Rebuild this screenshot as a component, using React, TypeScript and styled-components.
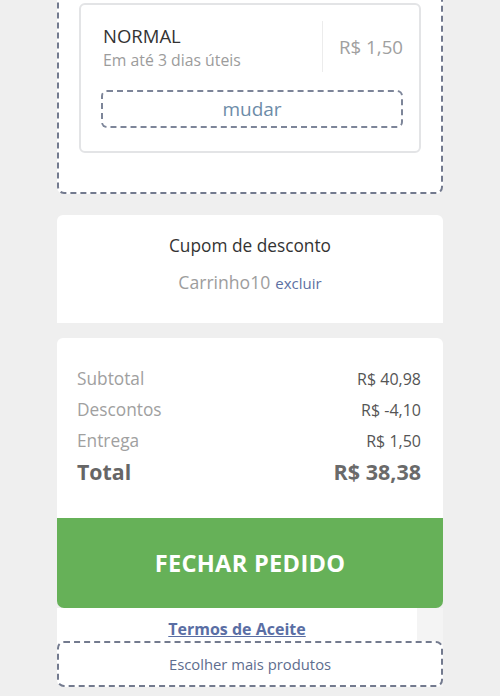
import React from "react";
import styled, { createGlobalStyle } from "styled-components";

const GlobalStyle = createGlobalStyle`
  html, body {
    margin: 0;
    padding: 0;
    background: #efefef;
    font-family: "Open Sans", "Noto Sans", sans-serif;
  }
`;

const Page = styled.div`
  width: 386px;
  margin: 0 auto;
  padding-bottom: 10px;
`;

const DashedBox = styled.div`
  border: 2px dashed #737a8e;
  border-radius: 7px;
  background: #fff;
  box-sizing: border-box;
`;

const ShippingBox = styled(DashedBox)`
  margin-top: -20px;
  padding: 21px 20px 39px;
`;

const ShippingCard = styled.div`
  border: 2px solid #e3e4e6;
  border-radius: 6px;
  padding: 16px 16px 23px 20px;
`;

const ShippingRow = styled.div`
  display: flex;
  align-items: center;
`;

const ShippingInfo = styled.div`
  flex: 1;
  padding-left: 2px;
`;

const ShippingName = styled.div`
  font-size: 18.5px;
  line-height: 27px;
  color: #333;
`;

const ShippingDays = styled.div`
  font-size: 15.8px;
  line-height: 22px;
  color: #9c9c9c;
`;

const ShippingPrice = styled.div`
  border-left: 1px solid #ececec;
  height: 51px;
  padding-left: 16px;
  display: flex;
  align-items: center;
  font-size: 18.7px;
  color: #a0a0a0;
`;

const ChangeButton = styled.div`
  margin-top: 18px;
  height: 38px;
  border: 2px dashed #7d8599;
  border-radius: 6px;
  box-sizing: border-box;
  display: flex;
  align-items: center;
  justify-content: center;
  font-size: 19px;
  color: #6d8ca8;
`;

const Card = styled.div<{ $top: number }>`
  margin-top: ${(p) => p.$top}px;
  background: #fff;
  border-radius: 6px 6px 0 0;
`;

const CouponCard = styled(Card)`
  height: 108px;
  padding-top: 19px;
  box-sizing: border-box;
  text-align: center;
`;

const CouponTitle = styled.div`
  font-size: 17.3px;
  line-height: 24px;
  color: #333;
`;

const CouponLine = styled.div`
  margin-top: 12px;
  font-size: 17.6px;
  line-height: 24px;
  color: #9d9d9d;
`;

const RemoveLink = styled.span`
  font-size: 15px;
  color: #5d70a3;
  margin-left: 5px;
`;

const SummaryCard = styled(Card)`
  padding: 25px 22px 31px 20px;
`;

const SummaryRow = styled.div`
  display: flex;
  justify-content: space-between;
  align-items: center;
  height: 31px;
`;

const Label = styled.span<{ $total?: boolean }>`
  font-size: ${(p) => (p.$total ? 21.3 : 17.3)}px;
  font-weight: ${(p) => (p.$total ? 700 : 400)};
  color: ${(p) => (p.$total ? "#666" : "#a0a0a0")};
`;

const Value = styled.span<{ $total?: boolean }>`
  font-size: ${(p) => (p.$total ? 21.5 : 16)}px;
  font-weight: ${(p) => (p.$total ? 700 : 400)};
  color: ${(p) => (p.$total ? "#6a6a6a" : "#555")};
`;

const CheckoutButton = styled.div`
  height: 90px;
  background: #66b158;
  border-radius: 0 0 7px 7px;
  display: flex;
  align-items: center;
  justify-content: center;
  color: #fff;
  font-size: 23.6px;
  font-weight: 700;
  letter-spacing: 0.3px;
`;

const Footer = styled.div`
  background: linear-gradient(to right, transparent 360px, #f4f4f4 360px);
`;

const TermsBar = styled.div`
  width: 360px;
  height: 40px;
  background: #fff;
  display: flex;
  justify-content: center;
  padding-top: 11px;
  box-sizing: border-box;
`;

const TermsLink = styled.span`
  font-size: 16px;
  line-height: 20px;
  font-weight: 700;
  color: #5a6ea4;
  text-decoration: underline;
`;

const MoreBox = styled(DashedBox)`
  margin-top: -7px;
  height: 46px;
  display: flex;
  align-items: center;
  justify-content: center;
  font-size: 14.8px;
  color: #5e6d8e;
  position: relative;
`;

const rows = [
  { label: "Subtotal", value: "R$ 40,98" },
  { label: "Descontos", value: "R$ -4,10" },
  { label: "Entrega", value: "R$ 1,50" },
];

export default function App() {
  return (
    <>
      <GlobalStyle />
      <Page>
        <ShippingBox>
          <ShippingCard>
            <ShippingRow>
              <ShippingInfo>
                <ShippingName>NORMAL</ShippingName>
                <ShippingDays>Em até 3 dias úteis</ShippingDays>
              </ShippingInfo>
              <ShippingPrice>R$ 1,50</ShippingPrice>
            </ShippingRow>
            <ChangeButton>mudar</ChangeButton>
          </ShippingCard>
        </ShippingBox>

        <CouponCard $top={21}>
          <CouponTitle>Cupom de desconto</CouponTitle>
          <CouponLine>
            Carrinho10<RemoveLink>excluir</RemoveLink>
          </CouponLine>
        </CouponCard>

        <SummaryCard $top={15}>
          {rows.map((r) => (
            <SummaryRow key={r.label}>
              <Label>{r.label}</Label>
              <Value>{r.value}</Value>
            </SummaryRow>
          ))}
          <SummaryRow>
            <Label $total>Total</Label>
            <Value $total>R$ 38,38</Value>
          </SummaryRow>
        </SummaryCard>

        <CheckoutButton>FECHAR PEDIDO</CheckoutButton>

        <Footer>
          <TermsBar>
            <TermsLink>Termos de Aceite</TermsLink>
          </TermsBar>
          <MoreBox>Escolher mais produtos</MoreBox>
        </Footer>
      </Page>
    </>
  );
}
